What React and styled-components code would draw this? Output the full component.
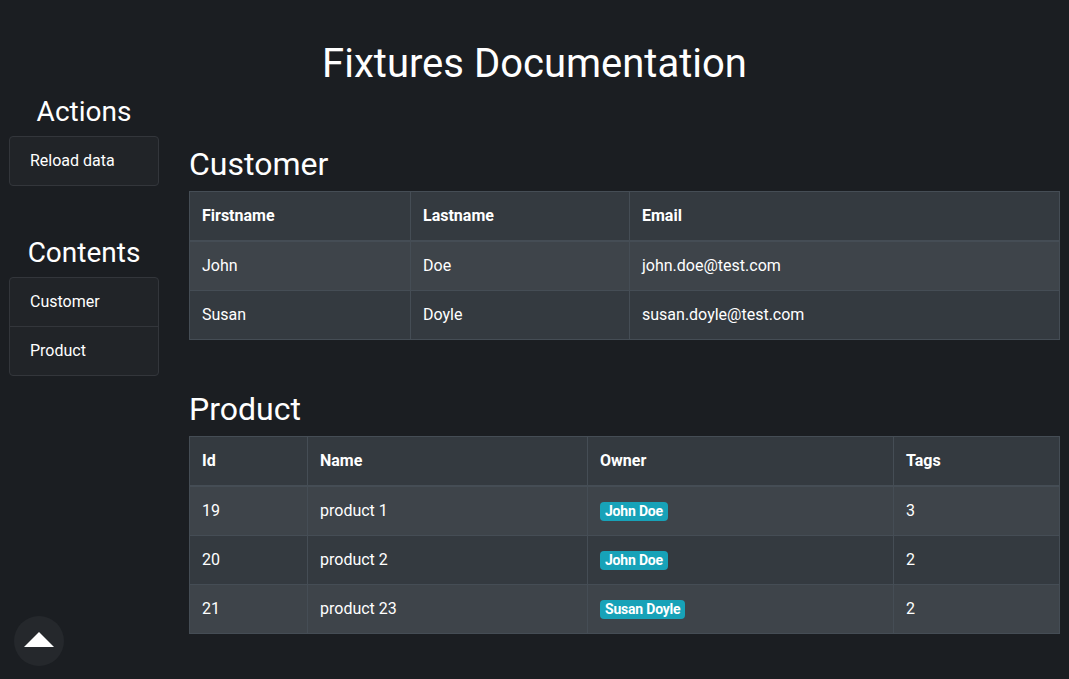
import React from 'react';
import styled, { createGlobalStyle } from 'styled-components';

const GlobalStyle = createGlobalStyle`
  html, body {
    margin: 0;
    padding: 0;
    background-color: #1b1e22;
    color: #ffffff;
    font-family: Roboto, "Liberation Sans", Arial, sans-serif;
    font-size: 16px;
    line-height: 1.5;
  }
  * { box-sizing: border-box; }
`;

const Page = styled.div`
  min-height: 679px;
  padding-top: 40px;
`;

const Title = styled.h1`
  margin: 0;
  font-size: 40px;
  font-weight: 400;
  line-height: 1.2;
  text-align: center;
`;

const Body = styled.div`
  display: grid;
  grid-template-columns: 150px 1fr;
  column-gap: 30px;
  padding: 0 9px;
  align-items: start;
`;

const Sidebar = styled.aside`
  display: flex;
  flex-direction: column;
  padding-top: 7px;
`;

const SideHeading = styled.h3`
  margin: ${p => (p.$spaced ? '50px' : '0')} 0 ${p => (p.$spaced ? '8px' : '7px')};
  font-size: 28px;
  font-weight: 400;
  line-height: 1.2;
  text-align: center;
`;

const ListGroup = styled.div`
  display: flex;
  flex-direction: column;
  border: 1px solid #33363b;
  border-radius: 4px;
  background-color: #212428;
  overflow: hidden;
`;

const ListItem = styled.a`
  display: block;
  padding: 12px 20px;
  line-height: 24px;
  color: #ffffff;
  text-decoration: none;
  & + & {
    border-top: 1px solid #33363b;
  }
`;

const Main = styled.main`
  padding-top: 57px;
`;

const SectionTitle = styled.h2`
  margin: 0 0 ${p => p.$gap || '8px'};
  font-size: 32px;
  font-weight: 400;
  line-height: 1.2;
`;

const Table = styled.table`
  width: 100%;
  border-collapse: collapse;
  margin-bottom: 50px;
  background-color: #343a40;
  border: 1px solid #454d55;
`;

const HeadCell = styled.th`
  width: ${p => p.$w || 'auto'};
  padding: 12px;
  text-align: left;
  font-weight: 700;
  line-height: 24px;
  border: 1px solid #454d55;
  border-bottom-width: 2px;
`;

const Row = styled.tr`
  background-color: ${p => (p.$odd ? '#3e444a' : '#343a40')};
`;

const Cell = styled.td`
  padding: 12px;
  line-height: 24px;
  border: 1px solid #454d55;
`;

const Badge = styled.span`
  display: inline-block;
  padding: 2px 5px;
  font-size: 14px;
  font-weight: 700;
  line-height: 1.05;
  letter-spacing: -0.2px;
  color: #ffffff;
  background-color: #17a2b8;
  border-radius: 4px;
  vertical-align: middle;
`;

const ScrollTop = styled.button`
  position: fixed;
  left: 14px;
  top: 616px;
  width: 50px;
  height: 50px;
  border: none;
  border-radius: 50%;
  background-color: #25282c;
  display: flex;
  align-items: center;
  justify-content: center;
  padding: 0;
  cursor: pointer;
`;

const Arrow = styled.span`
  width: 0;
  height: 0;
  border-left: 15px solid transparent;
  border-right: 15px solid transparent;
  border-bottom: 15px solid #ffffff;
  margin-top: -4px;
`;

const customers = [
  { first: 'John', last: 'Doe', email: 'john.doe@test.com' },
  { first: 'Susan', last: 'Doyle', email: 'susan.doyle@test.com' },
];

const products = [
  { id: 19, name: 'product 1', owner: 'John Doe', tags: 3 },
  { id: 20, name: 'product 2', owner: 'John Doe', tags: 2 },
  { id: 21, name: 'product 23', owner: 'Susan Doyle', tags: 2 },
];

export default function App() {
  return (
    <Page>
      <GlobalStyle />
      <Title>Fixtures Documentation</Title>
      <Body>
        <Sidebar>
          <SideHeading>Actions</SideHeading>
          <ListGroup>
            <ListItem href="#">Reload data</ListItem>
          </ListGroup>
          <SideHeading $spaced>Contents</SideHeading>
          <ListGroup>
            <ListItem href="#customer">Customer</ListItem>
            <ListItem href="#product">Product</ListItem>
          </ListGroup>
        </Sidebar>
        <Main>
          <SectionTitle id="customer">Customer</SectionTitle>
          <Table>
            <thead>
              <tr>
                <HeadCell $w="221px">Firstname</HeadCell>
                <HeadCell $w="219px">Lastname</HeadCell>
                <HeadCell>Email</HeadCell>
              </tr>
            </thead>
            <tbody>
              {customers.map((c, i) => (
                <Row key={c.email} $odd={i % 2 === 0}>
                  <Cell>{c.first}</Cell>
                  <Cell>{c.last}</Cell>
                  <Cell>{c.email}</Cell>
                </Row>
              ))}
            </tbody>
          </Table>

          <SectionTitle id="product" $gap="7px">Product</SectionTitle>
          <Table>
            <thead>
              <tr>
                <HeadCell $w="118px">Id</HeadCell>
                <HeadCell $w="280px">Name</HeadCell>
                <HeadCell $w="306px">Owner</HeadCell>
                <HeadCell>Tags</HeadCell>
              </tr>
            </thead>
            <tbody>
              {products.map((p, i) => (
                <Row key={p.id} $odd={i % 2 === 0}>
                  <Cell>{p.id}</Cell>
                  <Cell>{p.name}</Cell>
                  <Cell><Badge>{p.owner}</Badge></Cell>
                  <Cell>{p.tags}</Cell>
                </Row>
              ))}
            </tbody>
          </Table>
        </Main>
      </Body>
      <ScrollTop aria-label="Scroll to top">
        <Arrow />
      </ScrollTop>
    </Page>
  );
}
